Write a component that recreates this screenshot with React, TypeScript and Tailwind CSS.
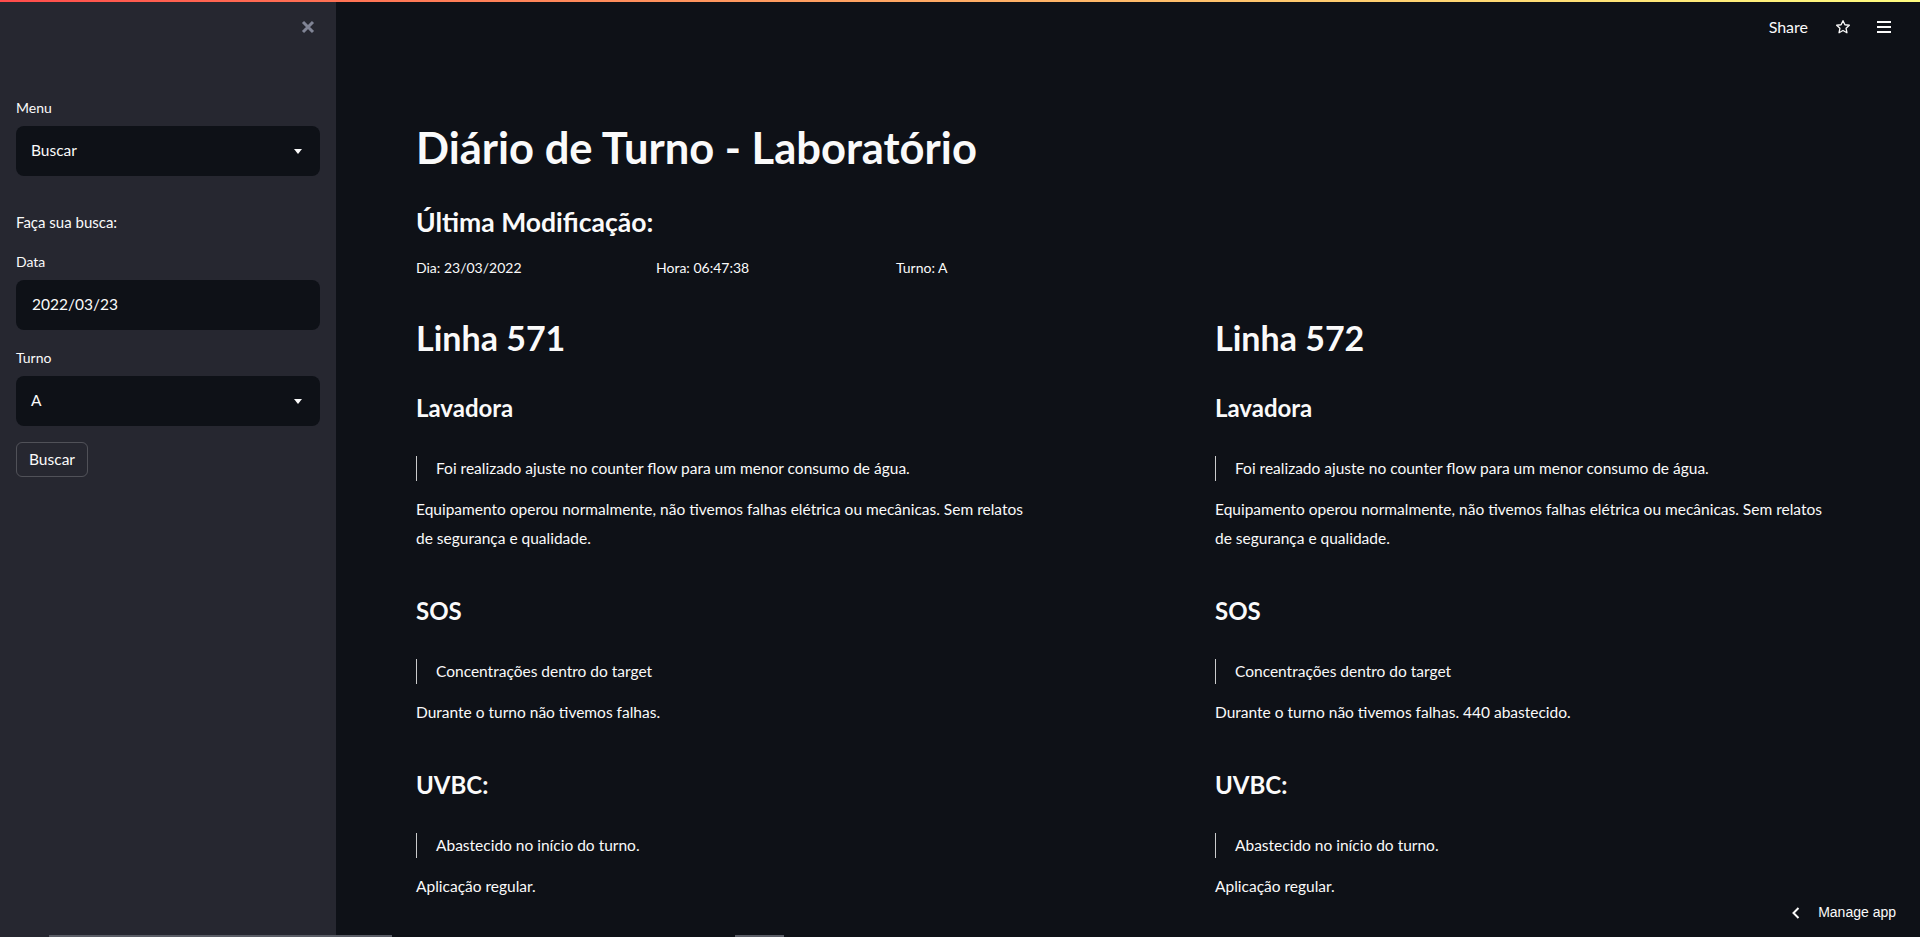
import React from 'react';

const sections = [
  {
    title: 'Lavadora',
    quote: 'Foi realizado ajuste no counter flow para um menor consumo de água.',
    text: 'Equipamento operou normalmente, não tivemos falhas elétrica ou mecânicas. Sem relatos de segurança e qualidade.',
  },
  {
    title: 'SOS',
    quote: 'Concentrações dentro do target',
    text: 'Durante o turno não tivemos falhas.',
  },
  {
    title: 'UVBC:',
    quote: 'Abastecido no início do turno.',
    text: 'Aplicação regular.',
  },
];

const lines = [
  { name: 'Linha 571', extra: ['', '', ''] },
  { name: 'Linha 572', extra: ['', ' 440 abastecido.', ''] },
];

function Caret() {
  return (
    <svg width="8" height="5" viewBox="0 0 8 5" className="fill-[#fafafa]">
      <path d="M0 0h8L4 5z" />
    </svg>
  );
}

function Label({ children }: { children: React.ReactNode }) {
  return <div className="h-[20px] text-[14px] leading-[20px] text-[#fafafa]">{children}</div>;
}

function SelectBox({ value }: { value: string }) {
  return (
    <div className="flex h-[50px] items-center justify-between rounded-lg bg-[#0e1117] pl-[15px] pr-[18px] text-[15.5px] text-[#fafafa]">
      <span>{value}</span>
      <Caret />
    </div>
  );
}

function Sidebar() {
  return (
    <aside className="relative h-full w-[336px] shrink-0 bg-[#262730] px-4">
      <button className="absolute right-[21px] top-[20px] text-[#808495]">
        <svg width="14" height="14" viewBox="0 0 14 14" className="stroke-current" strokeWidth="3">
          <path d="M2 2l10 10M12 2L2 12" />
        </svg>
      </button>
      <div className="pt-[98px]">
        <Label>Menu</Label>
        <div className="mt-[8px]">
          <SelectBox value="Buscar" />
        </div>
        <p className="mt-[34px] h-[24px] text-[15px] leading-[24px] text-[#fafafa]">Faça sua busca:</p>
        <div className="mt-[18px]">
          <Label>Data</Label>
        </div>
        <div className="mt-[8px] flex h-[50px] items-center rounded-lg bg-[#0e1117] pl-[16px] text-[15.5px] text-[#fafafa]">
          2022/03/23
        </div>
        <div className="mt-[18px]">
          <Label>Turno</Label>
        </div>
        <div className="mt-[8px]">
          <SelectBox value="A" />
        </div>
        <button className="mt-[16px] flex h-[35px] w-[72px] items-center justify-center rounded-md border border-[#fafafa]/20 text-[15.5px] text-[#fafafa]">
          Buscar
        </button>
      </div>
    </aside>
  );
}

function Section({ title, quote, text, first }: { title: string; quote: string; text: string; first: boolean }) {
  return (
    <div className={first ? 'mt-[28px]' : 'mt-[40px]'}>
      <h3 className="h-[36px] text-[24px] font-bold leading-[36px]">{title}</h3>
      <blockquote className="mt-[30px] border-l border-[#fafafa]/80 pl-[19px] text-[15.5px] leading-[25px]">{quote}</blockquote>
      <p className="mt-[14px] text-[15.5px] leading-[29px]">{text}</p>
    </div>
  );
}

function LineColumn({ name, extra }: { name: string; extra: string[] }) {
  return (
    <div>
      <h2 className="h-[48px] text-[34px] font-bold leading-[48px]">{name}</h2>
      {sections.map((s, i) => (
        <Section key={s.title} title={s.title} quote={s.quote} text={s.text + extra[i]} first={i === 0} />
      ))}
    </div>
  );
}

export default function App() {
  return (
    <div className="relative flex h-screen w-full overflow-hidden font-['Lato',sans-serif] text-[#fafafa]">
      <div className="absolute left-0 right-0 top-0 z-10 h-[2px] bg-linear-to-r from-[#ff4b4b] to-[#fffd80]" />
      <Sidebar />
      <main className="relative h-full flex-1 bg-[#0e1117]">
        <header className="flex h-[54px] items-center justify-end pr-[29px]">
          <span className="text-[16px]">Share</span>
          <svg width="16" height="16" viewBox="0 0 24 24" className="ml-[27px] fill-none stroke-[#fafafa]" strokeWidth="2" strokeLinejoin="round">
            <path d="M12 2.5l2.9 6.1 6.6.8-4.9 4.6 1.3 6.6L12 17.3l-5.9 3.3 1.3-6.6-4.9-4.6 6.6-.8z" />
          </svg>
          <svg width="14" height="12" viewBox="0 0 14 12" className="ml-[26px] fill-[#fafafa]">
            <rect y="0" width="14" height="2" />
            <rect y="5" width="14" height="2" />
            <rect y="10" width="14" height="2" />
          </svg>
        </header>
        <div className="px-[80px]">
          <h1 className="mt-[65px] h-[56px] text-[43.5px] font-bold leading-[56px]">Diário de Turno - Laboratório</h1>
          <h3 className="mt-[29px] h-[36px] text-[26.5px] font-bold leading-[36px]">Última Modificação:</h3>
          <div className="mt-[16px] grid grid-cols-6 gap-4 text-[14px] leading-[24px]">
            <span>Dia: 23/03/2022</span>
            <span>Hora: 06:47:38</span>
            <span>Turno: A</span>
          </div>
          <div className="mt-[34px] grid grid-cols-[625px_625px] justify-between">
            {lines.map((l) => (
              <LineColumn key={l.name} name={l.name} extra={l.extra} />
            ))}
          </div>
        </div>
        <div className="absolute bottom-[14px] right-[24px] flex items-center text-[14px] font-['Liberation_Sans',sans-serif]">
          <svg width="8" height="12" viewBox="0 0 8 12" className="fill-none stroke-[#fafafa]" strokeWidth="2">
            <path d="M6.5 1L1.5 6l5 5" />
          </svg>
          <span className="ml-[18px]">Manage app</span>
        </div>
      </main>
      <div className="absolute bottom-0 left-[49px] h-[2px] w-[343px] bg-[#5a5d66]" />
      <div className="absolute bottom-0 left-[735px] h-[2px] w-[49px] bg-[#5a5d66]" />
    </div>
  );
}
